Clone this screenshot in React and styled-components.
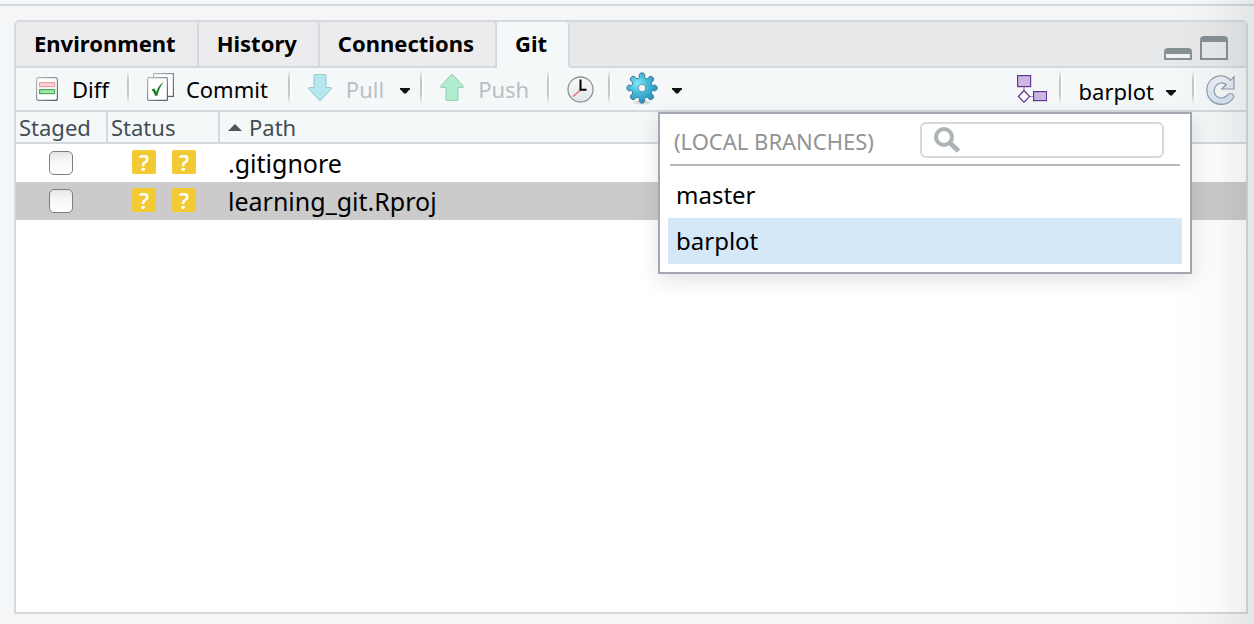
import React, { useState } from "react";
import styled, { createGlobalStyle, css } from "styled-components";

const line = "#d5d9db";
const bar = "#f4f8f9";

const GlobalStyle = createGlobalStyle`
  *, *::before, *::after { box-sizing: border-box; }
  html, body, #root { height: 100%; }
  body {
    margin: 0;
    background: #f4f6f8;
    color: #000;
    font-family: "Noto Sans", "Open Sans", sans-serif;
    font-size: 22px;
    line-height: 30px;
  }
  button, input { font: inherit; color: inherit; }
`;

const Page = styled.div`
  position: relative;
  display: flex;
  flex-direction: column;
  min-height: 100%;
`;

const UpperPaneEdge = styled.div`
  height: 6px;
  background: ${bar};
  border-bottom: 2px solid ${line};
`;

const EdgeShade = styled.div`
  position: absolute;
  top: 0;
  right: 0;
  bottom: 0;
  width: 80px;
  pointer-events: none;
  background: linear-gradient(to right, rgba(0, 0, 0, 0), rgba(0, 0, 0, 0.02) 50%, rgba(0, 0, 0, 0.07));
`;

const Panel = styled.section`
  flex: 1;
  display: flex;
  flex-direction: column;
  margin: 14px 6px 10px 14px;
  border: 2px solid ${line};
  border-radius: 6px 6px 0 0;
  background: #fff;
`;

const TabBar = styled.div`
  display: flex;
  height: 46px;
  background: #e6e8ea;
  border-radius: 4px 4px 0 0;
`;

const Tab = styled.button`
  height: 46px;
  padding: 0 21px 2px 18px;
  border: 0;
  border-right: 2px solid ${line};
  border-bottom: 2px solid ${(p) => (p.$active ? bar : line)};
  border-radius: 4px 4px 0 0;
  background: ${(p) => (p.$active ? bar : "#ececee")};
  font-weight: 700;
`;

const TabFill = styled.div`
  flex: 1;
  display: flex;
  justify-content: flex-end;
  align-items: flex-end;
  gap: 8px;
  padding: 0 18px 6px 0;
  border-bottom: 2px solid ${line};
`;

const WindowButton = styled.button`
  display: flex;
  padding: 0;
  border: 0;
  background: none;
`;

const Toolbar = styled.div`
  display: flex;
  align-items: center;
  height: 44px;
  padding: 0 10px 0 20px;
  background: ${bar};
  border-bottom: 2px solid ${line};
`;

const Spacer = styled.div`
  flex: 1;
`;

const Separator = styled.div`
  width: 4px;
  height: 34px;
  margin: 0 ${(p) => p.$after || 16}px 4px ${(p) => p.$before || 18}px;
  background: linear-gradient(to right, #c4c8ca 2px, #fff 2px);
  mask-image: linear-gradient(transparent, #000 30%, #000 70%, transparent);
`;

const ToolButton = styled.button`
  display: flex;
  align-items: center;
  gap: ${(p) => p.$gap || 14}px;
  height: 40px;
  padding: 0;
  border: 0;
  background: none;
  svg { flex: none; }
  &:disabled { color: #b9bfc1; }
`;

const MenuArrow = styled(ToolButton)`
  margin-left: 16px;
`;

const BranchAnchor = styled.div`
  position: relative;
`;

const BranchButton = styled(ToolButton)`
  padding-top: 4px;
`;

const BranchMenu = styled.div`
  position: absolute;
  z-index: 2;
  top: 43px;
  right: -16px;
  width: 534px;
  padding: 8px;
  border: 2px solid #a3a7b4;
  background: #fff;
  box-shadow: 0 6px 20px rgba(0, 0, 0, 0.12);
`;

const MenuHead = styled.div`
  display: flex;
  justify-content: space-between;
  align-items: flex-end;
  height: 44px;
  margin: 0 2px 6px;
  padding: 0 16px 6px 4px;
  border-bottom: 2px solid #b8b8b8;
  color: #939393;
  line-height: 34px;
`;

const SearchBox = styled.label`
  display: flex;
  align-items: center;
  gap: 8px;
  width: 244px;
  height: 36px;
  padding: 0 10px 0 12px;
  border: 2px solid ${line};
  border-radius: 6px;
  background: #fff;
`;

const SearchInput = styled.input`
  flex: 1;
  min-width: 0;
  height: 28px;
  padding: 0;
  border: 0;
  outline: 0;
  background: none;
`;

const BranchItem = styled.button`
  display: block;
  width: 100%;
  height: 46px;
  padding: 0 8px;
  border: 0;
  background: ${(p) => (p.$selected ? "#d5e8f8" : "#fff")};
  font-size: 24px;
  text-align: left;
`;

const FileTable = styled.table`
  width: 100%;
  table-layout: fixed;
  border-collapse: separate;
  border-spacing: 0;
`;

const HeadCell = styled.th`
  width: ${(p) => (p.$width ? `${p.$width}px` : "auto")};
  height: 32px;
  padding: 0 3px;
  border-bottom: 2px solid ${line};
  background: ${bar};
  color: #424d54;
  font-weight: 400;
  line-height: 28px;
  text-align: left;
  ${(p) => p.$width && css`border-right: 2px solid ${line};`}
  svg { margin: 0 7px 5px 5px; }
`;

const FileRow = styled.tr`
  height: 38px;
  background: ${(p) => (p.$selected ? "#cbcbcb" : "#fff")};
`;

const Cell = styled.td`
  height: 38px;
  padding: 0;
`;

const StageCell = styled(Cell)`
  padding-right: 2px;
`;

const PathCell = styled(Cell)`
  padding-left: 8px;
  font-size: 25px;
`;

const StageBox = styled.input`
  appearance: none;
  display: block;
  width: 24px;
  height: 24px;
  margin: 0 auto;
  border: 1px solid #7e7e80;
  border-radius: 5px;
  background: linear-gradient(#e6e6e8, #f6f6f8 40%, #fff);
  &:checked { background: #5b9bd5; }
`;

const Badges = styled.div`
  display: flex;
  justify-content: center;
  gap: 16px;
  padding-bottom: 2px;
`;

const Badge = styled.span`
  width: 24px;
  height: 24px;
  border-radius: 2px;
  background: #f2ca34;
  color: #fff;
  font-size: 22px;
  font-weight: 600;
  line-height: 24px;
  text-align: center;
`;

const Caret = () => (
  <svg width="10" height="10" viewBox="0 0 10 10" aria-hidden="true">
    <path d="M0 4h10v1.500L8.500 6.500 6 9.500H4L1.500 6.500 0 5.500z" fill="#111" />
  </svg>
);

const DiffIcon = () => (
  <svg width="22" height="24" viewBox="0 0 22 24" aria-hidden="true">
    <defs>
      <linearGradient id="pageEdge" x1="0" y1="0" x2="1" y2="1">
        <stop offset="0" stopColor="#b7b9bb" />
        <stop offset="1" stopColor="#4f6070" />
      </linearGradient>
    </defs>
    <rect x=".6" y=".6" width="20.8" height="22.8" rx="2" fill="#fff" stroke="url(#pageEdge)" strokeWidth="1.2" />
    <rect x="3.6" y="5.6" width="15" height="4" fill="#f8d4d4" stroke="#eba0a0" strokeWidth="1.2" />
    <rect x="3.6" y="12.6" width="15" height="4" fill="#a9e5ad" stroke="#45b153" strokeWidth="1.2" />
  </svg>
);

const CommitIcon = () => (
  <svg width="27" height="32" viewBox="0 0 27 32" aria-hidden="true">
    <rect x="6.6" y=".6" width="19.8" height="22.8" fill="#fff" stroke="url(#pageEdge)" strokeWidth="1.2" />
    <rect x=".6" y="4.6" width="19.8" height="22.8" rx="1" fill="#fff" stroke="url(#pageEdge)" strokeWidth="1.2" />
    <path d="M4.500 16.800l2.800-1.500 1.900 3.600C11.200 14 13.400 11 17 8.800c-3.500 4-5.200 8.400-6.700 14H8.100C7.200 20.200 6.100 18.300 4.500 16.800z" fill="#1c8020" />
  </svg>
);

const PullIcon = () => (
  <svg width="24" height="30" viewBox="0 0 24 30" aria-hidden="true">
    <path d="M6 1.500Q6 .6 7 .6h10q1 0 1 .9V13.500h5q1 .4.300 1.400L13 26q-1 1-2 0L.7 14.900q-.7-1 .3-1.400h5z" fill="#b3e8ee" stroke="#9bc9cf" />
  </svg>
);

const PushIcon = () => (
  <svg width="24" height="30" viewBox="0 0 24 30" aria-hidden="true">
    <path d="M6 25.500q0 .9 1 .9h10q1 0 1-.9V13.500h5q1-.4.300-1.400L13 1q-1-1-2 0L.7 12.100q-.7 1 .3 1.400h5z" fill="#b2ecd0" stroke="#93cdb0" />
  </svg>
);

const ClockIcon = () => (
  <svg width="27" height="27" viewBox="0 0 27 27" aria-hidden="true">
    <defs>
      <linearGradient id="dial" x1="0" y1="0" x2="0" y2="1">
        <stop offset="0" stopColor="#f8f9f9" />
        <stop offset="1" stopColor="#e4e7e9" />
      </linearGradient>
    </defs>
    <circle cx="13.500" cy="13.500" r="12.500" fill="url(#dial)" stroke="#8e9496" strokeWidth="1.300" />
    <path d="M13 14.500L6 20.500" stroke="#f06666" strokeWidth="1.500" />
    <path d="M13.500 3.500v10.300h6" fill="none" stroke="#000" strokeWidth="2" />
  </svg>
);

// Eight blunt, rounded teeth around the hub, joined by shallow valleys.
const polar = (radius, degrees) => {
  const a = (degrees * Math.PI) / 180;
  return `${(radius * Math.cos(a)).toFixed(2)} ${(radius * Math.sin(a)).toFixed(2)}`;
};

const gearOutline = Array.from({ length: 8 }, (_, i) => {
  const c = i * 45;
  return [
    `${i ? "L" : "M"}${polar(11, c - 13)}`,
    `L${polar(13.6, c - 12)}`,
    `Q${polar(15.2, c - 9)} ${polar(15.2, c)}`,
    `Q${polar(15.2, c + 9)} ${polar(13.6, c + 12)}`,
    `L${polar(11, c + 13)}`,
    `Q${polar(9.6, c + 22.5)} ${polar(11, c + 32)}`,
  ].join("");
}).join("") + "z";

const GearIcon = () => (
  <svg width="32" height="34" viewBox="-16 -16 32 34" aria-hidden="true">
    <defs>
      <radialGradient id="gearFill" cx=".36" cy=".36" r=".6">
        <stop offset="0" stopColor="#7eeaf8" />
        <stop offset=".5" stopColor="#48bcdc" />
        <stop offset="1" stopColor="#2c98c4" />
      </radialGradient>
    </defs>
    <ellipse cy="14.500" rx="9" ry="2" fill="#000" opacity=".1" />
    <path d={gearOutline} fill="url(#gearFill)" stroke="#41788e" />
    <circle r="3.800" fill="#f4f8f9" stroke="#5f93a6" />
  </svg>
);

const BranchIcon = () => (
  <svg width="30" height="28" viewBox="0 0 30 28" fill="#cbb8de" stroke="#673495" strokeWidth="1.200" aria-hidden="true">
    <path d="M7 12v5M12 21.500h5" fill="none" stroke="#ad8fca" />
    <rect x=".6" y=".6" width="13" height="11" />
    <rect x="16.600" y="16.600" width="13" height="9" />
    <path d="M7 15.500l5.600 6L7 27.200l-5.600-5.700z" fill="#fff" />
  </svg>
);

const RefreshIcon = () => (
  <svg width="30" height="32" viewBox="0 0 30 32" aria-hidden="true">
    <defs>
      <linearGradient id="refreshFill" x1="0" y1="0" x2="0" y2="1">
        <stop offset="0" stopColor="#eef1f6" />
        <stop offset="1" stopColor="#d3e0f4" />
      </linearGradient>
    </defs>
    <path
      transform="translate(0 2)"
      d="M24.600 5.300L28 1.700V14H15.800l4.500-4.500C18 7.700 14.500 7.300 11.600 9.200 7.500 12 7 17.500 10.200 20.800c3.200 3.200 7.900 2.800 10.900-.3.900-.9 1.900-2.200 3.700-2 2.500.3 3.700 2.600 2.300 4.800C24.600 27.200 20 29.500 15 29.300 6.500 29 .8 22.800.8 15 .8 7.300 6.800 1.200 14.500.9c3.800-.1 7.300 1.500 10.100 4.400z"
      fill="url(#refreshFill)"
      stroke="#929cad"
      strokeWidth="1.200"
    />
  </svg>
);

const SearchIcon = () => (
  <svg width="26" height="26" viewBox="0 0 26 26" fill="none" stroke="#acb4b8" aria-hidden="true">
    <circle cx="10" cy="10" r="8" strokeWidth="4" />
    <path d="M15.500 15.500l9 8.500" strokeWidth="5" />
  </svg>
);

const MinimizeIcon = () => (
  <svg width="28" height="12" viewBox="0 0 28 12" aria-hidden="true">
    <path d="M0 12V4q0-4 4-4h20q4 0 4 4v8z" fill="#879195" />
    <path d="M2 6h24v4H2z" fill="#f1f3f4" />
  </svg>
);

const MaximizeIcon = () => (
  <svg width="28" height="24" viewBox="0 0 28 24" aria-hidden="true">
    <path d="M0 24V4q0-4 4-4h20q4 0 4 4v20z" fill="#879195" />
    <path d="M2 6h24v16H2z" fill="#e6e8ea" />
  </svg>
);

const SortIcon = () => (
  <svg width="14" height="7" viewBox="0 0 14 7" aria-hidden="true">
    <path d="M7 0l7 7H0z" fill="#4b565d" />
  </svg>
);

const tabs = ["Environment", "History", "Connections", "Git"];
const files = [".gitignore", "learning_git.Rproj"];
const branches = ["master", "barplot"];

export default function App() {
  const [tab, setTab] = useState("Git");
  const [branch, setBranch] = useState("barplot");
  const [selectedFile, setSelectedFile] = useState(files[1]);
  const [open, setOpen] = useState(true);

  return (
    <>
      <GlobalStyle />
      <Page>
        <UpperPaneEdge />
        <Panel>
          <TabBar role="tablist">
            {tabs.map((name) => (
              <Tab key={name} role="tab" aria-selected={tab === name} $active={tab === name} onClick={() => setTab(name)}>
                {name}
              </Tab>
            ))}
            <TabFill>
              <WindowButton aria-label="Minimize"><MinimizeIcon /></WindowButton>
              <WindowButton aria-label="Maximize"><MaximizeIcon /></WindowButton>
            </TabFill>
          </TabBar>

          <Toolbar>
            <ToolButton><DiffIcon />Diff</ToolButton>
            <Separator />
            <ToolButton $gap={12}><CommitIcon />Commit</ToolButton>
            <Separator $before={20} />
            <ToolButton disabled><PullIcon />Pull</ToolButton>
            <MenuArrow aria-label="Pull options"><Caret /></MenuArrow>
            <Separator $before={10} />
            <ToolButton disabled><PushIcon />Push</ToolButton>
            <Separator />
            <ToolButton aria-label="History"><ClockIcon /></ToolButton>
            <Separator $before={14} $after={14} />
            <ToolButton aria-label="More"><GearIcon /><Caret /></ToolButton>
            <Spacer />
            <ToolButton aria-label="New branch"><BranchIcon /></ToolButton>
            <Separator $before={12} />
            <BranchAnchor>
              <BranchButton $gap={12} aria-expanded={open} onClick={() => setOpen(!open)}>
                {branch}<Caret />
              </BranchButton>
              {open && (
                <BranchMenu>
                  <MenuHead>
                    (LOCAL BRANCHES)
                    <SearchBox>
                      <SearchIcon />
                      <SearchInput type="text" aria-label="Search branches" />
                    </SearchBox>
                  </MenuHead>
                  {branches.map((name) => (
                    <BranchItem key={name} $selected={branch === name} onClick={() => setBranch(name)}>
                      {name}
                    </BranchItem>
                  ))}
                </BranchMenu>
              )}
            </BranchAnchor>
            <Separator $before={16} $after={10} />
            <ToolButton aria-label="Refresh"><RefreshIcon /></ToolButton>
          </Toolbar>

          <FileTable>
            <thead>
              <tr>
                <HeadCell $width={92}>Staged</HeadCell>
                <HeadCell $width={112}>Status</HeadCell>
                <HeadCell><SortIcon />Path</HeadCell>
              </tr>
            </thead>
            <tbody>
              {files.map((name) => (
                <FileRow key={name} $selected={selectedFile === name} onClick={() => setSelectedFile(name)}>
                  <StageCell><StageBox type="checkbox" aria-label={`Stage ${name}`} /></StageCell>
                  <Cell><Badges><Badge>?</Badge><Badge>?</Badge></Badges></Cell>
                  <PathCell>{name}</PathCell>
                </FileRow>
              ))}
            </tbody>
          </FileTable>
        </Panel>
        <EdgeShade />
      </Page>
    </>
  );
}
